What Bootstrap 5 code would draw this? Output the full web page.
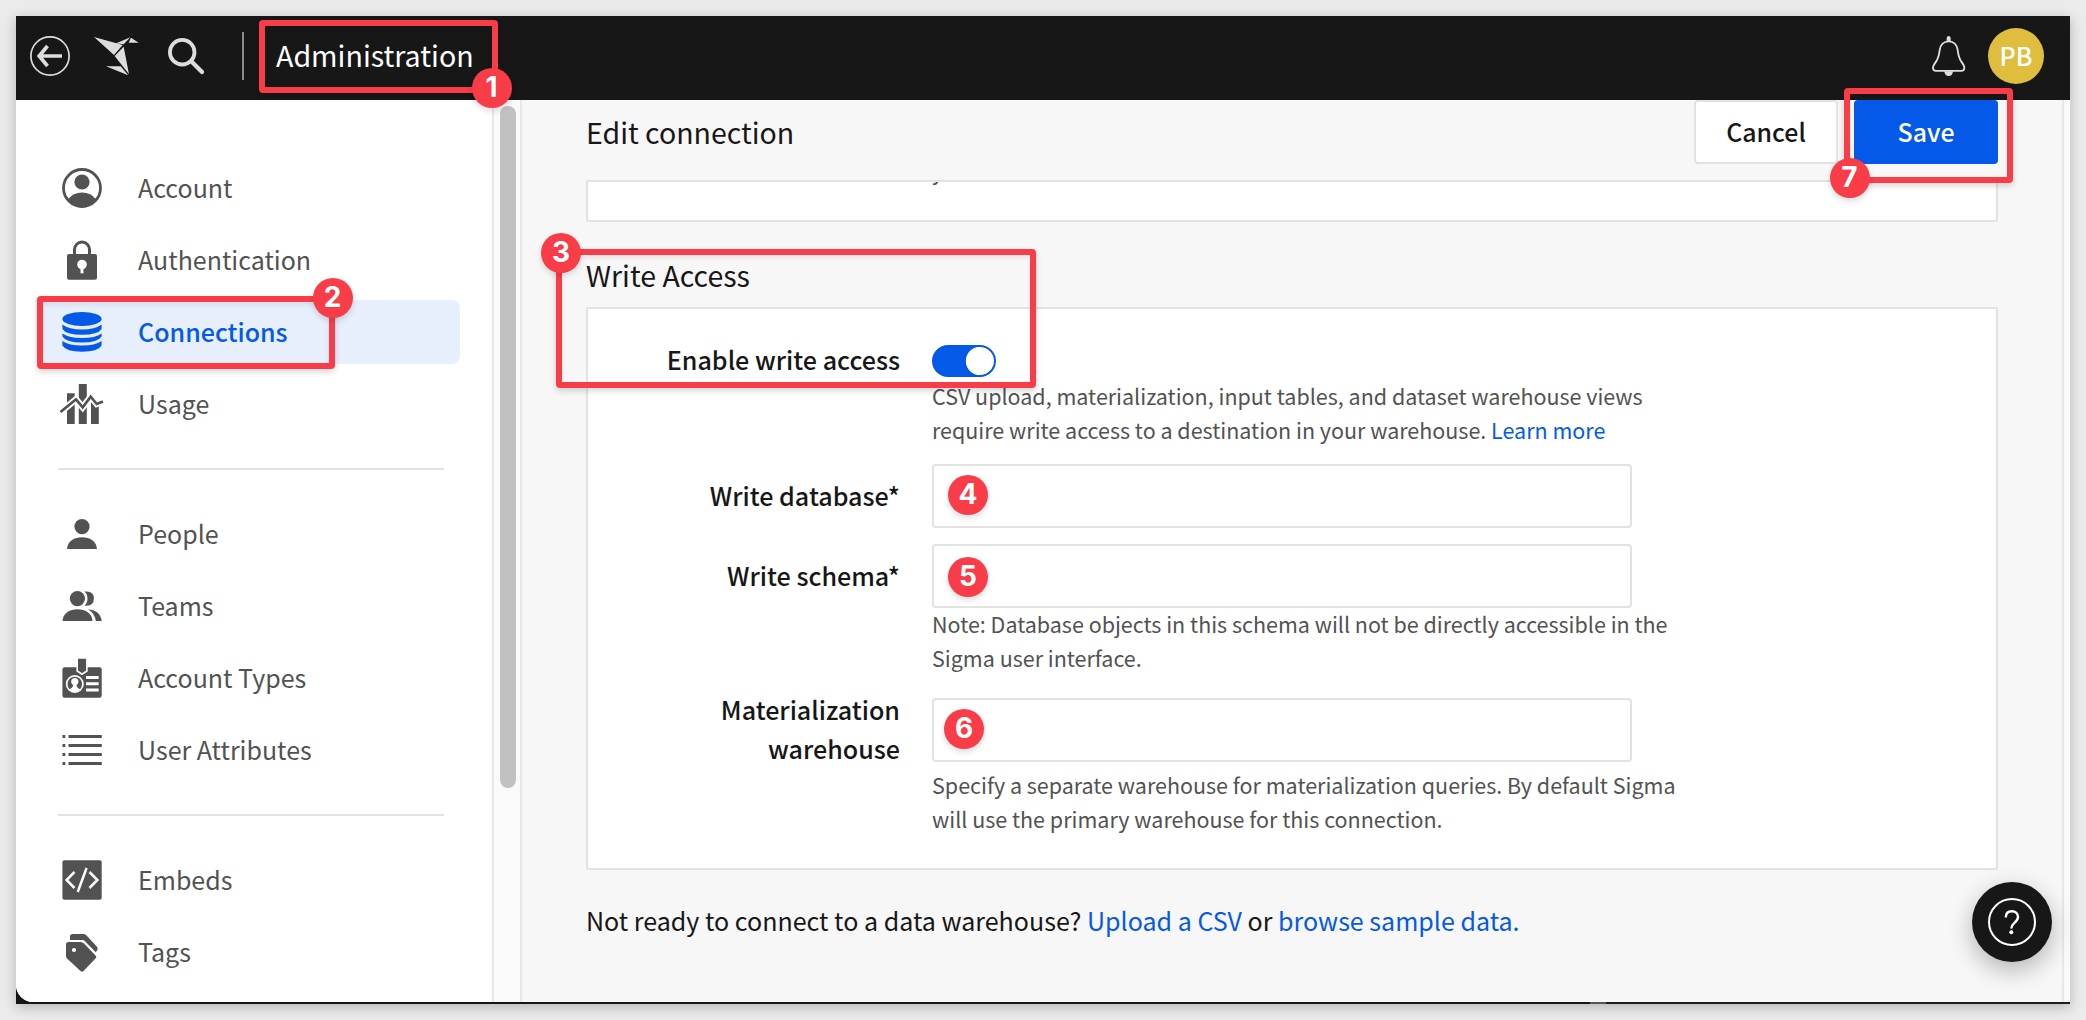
<!DOCTYPE html>
<html lang="en">
<head>
<meta charset="utf-8">
<meta name="viewport" content="width=device-width, initial-scale=1">
<title>Administration - Edit connection</title>
<link rel="stylesheet" href="https://cdn.jsdelivr.net/npm/bootstrap@5.3.0/dist/css/bootstrap.min.css">
<style>
  :root { --ink: #171717; --muted: #525252; --line: #e2e2e2; --blue: #0559e8; --red: #f93d48; }
  body { height: 1020px; overflow: hidden; background: #ebebeb; color: var(--ink);
    font-family: "Noto Sans CJK SC", "Noto Sans", sans-serif; font-size: 25px; line-height: 40px; padding: 16px; }
  a { text-decoration: none; color: var(--blue); }
  svg { display: block; flex: none; }
  .app-frame { width: 2054px; height: 988px; padding-bottom: 2px; box-shadow: 0 3px 12px rgba(0,0,0,.24);
    background: linear-gradient(90deg, #151515 1574px, #555 1574px, #555 1590px, #1d1b22 1590px); }
  .app-bar { height: 84px; background: #171717; padding: 0 26px 4px 14px; color: #fff; }
  .bar-title { font-size: 28.6px; padding-bottom: 2px; margin-left: 32px; }
  .bar-rule { width: 2px; height: 48px; background: #8b8b8b; margin-left: 37px; }
  .avatar { width: 56px; height: 56px; background: #dfbd3d; font-weight: 500; margin-left: 22px; padding-bottom: 3px; }
  .app-body { height: 902px; background: #f7f7f7; border-bottom-left-radius: 17px; overflow: hidden; }
  .side { width: 476px; background: #fff; padding: 56px 32px 0 24px; }
  .side .nav { gap: 8px; }
  .side .nav-link { height: 64px; padding: 0 0 0 22px; gap: 36px; color: var(--muted); border-radius: 8px; }
  .side .nav-link span { padding-bottom: 3px; }
  .side .nav-link.active { background: #e7eefc; color: var(--blue); font-weight: 500; }
  .side-rule { height: 2px; background: var(--line); margin: 32px 16px 32px 18px; }
  .track { width: 30px; background: #fafafa; border: solid #e8e8e8; border-width: 0 2px; padding: 6px 4px 0 6px; }
  .thumb { height: 682px; width: 16px; border-radius: 8px; background: #c1c1c1; }
  .main-pane { padding: 0 64px; }
  .page-title { font-size: 28.5px; font-weight: 400; line-height: 40px; margin: 0; }
  .page-head { height: 64px; }
  .page-head .page-title { padding-bottom: 1px; }
  .page-head .btn { width: 144px; height: 64px; font-size: 24.9px; font-weight: 500; border-radius: 4px; padding: 0 0 1px; line-height: 1; }
  .btn-cancel { background: #fff; border: 2px solid var(--line); color: var(--ink); }
  .btn-save { background: var(--blue); border: 0; color: #fff; }
  .panel { background: #fff; border: 2px solid var(--line); border-radius: 2px; }
  .panel-cut { height: 42px; margin-top: 16px; overflow: hidden; padding-left: 344px; }
  .panel-cut .hint { margin-top: -28px; }
  .section-title { margin: 33px 0 12px; }
  .panel-form { height: 563px; padding-top: 36px; }
  .f-label { width: 312px; margin-right: 32px; text-align: right; font-size: 25.1px; font-weight: 500; line-height: 39px; flex: none; }
  .f-label-switch { margin-top: -5px; }
  .f-label-input { margin-top: 12px; }
  .f-label-tall { margin-top: -8px; padding-left: 60px; }
  .hint { font-size: 21.49px; line-height: 34px; color: var(--muted); width: 756px; margin: 0; }
  .form-control.f-box { width: 700px; height: 64px; border: 2px solid var(--line); border-radius: 4px; background: #fff; }
  .form-check-input.f-switch { width: 64px; height: 32px; margin: 0; display: block; border: 2px solid var(--blue);
    background-color: var(--blue); border-radius: 16px; }
  .form-check-input.f-switch:checked { background-image: radial-gradient(circle at 46px 14px, #fff 13.8px, var(--blue) 14.6px); background-position: 0 0; background-size: 100%; background-origin: padding-box; }
  .right-track { width: 8px; background: #fafafa; border-left: 2px solid #e8e8e8; }
  .foot-note { margin: 30px 0 0; font-size: 25.04px; }
  /* callouts and floating help lie over the page */
  .callout-box { position: absolute; border: 6px solid var(--red); border-radius: 4px; box-shadow: 0 3px 6px rgba(0,0,0,.16), inset 0 3px 5px rgba(0,0,0,.08); }
  .callout-num { position: absolute; width: 40px; height: 40px; border-radius: 50%; background: var(--red); color: #fff;
    font: 700 28px/39px Inter, sans-serif; text-align: center; box-shadow: 0 3px 6px rgba(0,0,0,.14); }
  .help-fab { position: absolute; left: 1972px; top: 882px; width: 80px; height: 80px; border-radius: 50%; border: 0; padding: 0;
    background: #171717; box-shadow: 0 8px 24px rgba(0,0,0,.28); }
</style>
<script src="https://cdn.jsdelivr.net/npm/bootstrap@5.3.0/dist/js/bootstrap.bundle.min.js"></script>
</head>
<body>
<div class="app-frame">
  <header class="app-bar d-flex align-items-center">
    <svg width="40" height="40" viewBox="0 0 40 40" fill="none" stroke="#ddd"><circle cx="20" cy="20" r="19.1" stroke-width="1.7"/><path d="M32 20H9.5M17.5 10L9.2 20l8.3 10" stroke-width="3.7"/></svg>
    <svg style="margin-left:24px" width="45" height="38.4" viewBox="222 51 135 115" fill="#ddd"><path d="M222 51L308 75 282 105zM289 70L331 52 311 73zM333 53L356 68H326zM284 108L311 80 327 163zM258 139H302L325 166z"/></svg>
    <svg style="margin-left:28px" width="38" height="38" viewBox="0 0 38 38" fill="none" stroke="#ddd"><circle cx="15.2" cy="15.2" r="12.3" stroke-width="3.8"/><path d="M24.5 24.5L35 35" stroke-width="4.2" stroke-linecap="round"/></svg>
    <div class="bar-rule"></div>
    <div class="bar-title">Administration</div>
    <svg class="ms-auto" width="33.7" height="40" viewBox="814 108 101 120"><path d="M864 124C848 124 839 136 837 150C835 168 834 173 826 185C820 193 817 197 817 204Q817 212 826 212.500H902Q911 212 911 204C911 197 908 193 902 185C894 173 893 168 891 150C889 136 880 124 864 124Z" fill="none" stroke="#ddd" stroke-width="5.5"/><path d="M858 124V113Q859 108 864 108Q869 108 870 113V124zM851 214H877Q876 228 864 228Q852 228 851 214z" fill="#ddd"/></svg>
    <div class="avatar rounded-circle d-flex align-items-center justify-content-center">PB</div>
  </header>

  <div class="app-body d-flex">
    <aside class="side flex-shrink-0">
      <nav class="nav flex-column">
        <a class="nav-link d-flex align-items-center" href="#"><svg width="40" height="40" viewBox="0 0 40 40" fill="#525252"><circle cx="20" cy="20" r="18.500" fill="none" stroke="#525252" stroke-width="2.800"/><circle cx="20" cy="14" r="7.600"/><path d="M6.500 31Q11 24.500 20 24.500T33.500 31Q29 39.500 20 39.500T6.500 31z"/></svg><span>Account</span></a>
        <a class="nav-link d-flex align-items-center" href="#"><svg width="40" height="40" viewBox="0 0 40 40" fill="#525252"><path d="M12.500 15V9.500a7.500 7.500 0 0 1 15 0V15" fill="none" stroke="#525252" stroke-width="3"/><rect x="5" y="14" width="30" height="25.700" rx="2"/><circle cx="20" cy="24.500" r="4.800" fill="#fff"/><path d="M18.500 27h3v6.300h-3z" fill="#fff"/></svg><span>Authentication</span></a>
        <a class="nav-link active d-flex align-items-center" href="#"><svg width="40" height="40" viewBox="0 0 40 40" fill="#0559e8"><ellipse cx="20" cy="7" rx="19.600" ry="6.900"/><path d="M.4 12.500Q7 17.500 20 17.500T39.600 12.500V17Q36 22.800 20 22.800T.4 17zM.4 21.500Q7 26 20 26T39.600 21.500V24.500Q36 30.500 20 30.500T.4 24.500zM.4 29Q7 33.500 20 33.500T39.600 29V33.500Q36 39.700 20 39.700T.4 33.500z"/></svg><span>Connections</span></a>
        <a class="nav-link d-flex align-items-center" href="#"><svg width="40" height="40" viewBox="0 0 40 40" fill="#525252" overflow="visible"><path d="M5 9.300h7.700V40H5zM16.800 0h8V40h-8zM29 18h7.800V40H29z"/><path d="M-2 28.500L14 15.300 20.700 23.300 28.700 12.700 34.700 20 42 17.200" fill="none" stroke="#fff" stroke-width="6.500"/><path d="M-1.500 28L14 15.300 20.700 23.300 28.700 12.700 34.700 20 41 17.500" fill="none" stroke="#525252" stroke-width="2.700"/></svg><span>Usage</span></a>
      </nav>
      <div class="side-rule"></div>
      <nav class="nav flex-column">
        <a class="nav-link d-flex align-items-center" href="#"><svg width="40" height="40" viewBox="0 0 40 40" fill="#525252"><circle cx="20" cy="12.600" r="7.600"/><path d="M5 35Q5.500 29 10 26Q14 23.200 20 23.200T30 26Q34.500 29 35 35z"/></svg><span>People</span></a>
        <a class="nav-link d-flex align-items-center" href="#"><svg width="40" height="40" viewBox="0 0 40 40" fill="#525252"><circle cx="15.400" cy="12.600" r="7.600"/><path d="M.5 35Q1 29 5.500 26Q9.500 23.200 15.500 23.200T25.500 26Q30 29 30.500 35z"/><path d="M22.500 5.600Q31.800 4.500 31.900 12.600Q31.800 20.700 22.500 19.700Q25.500 17 25.500 12.600T22.500 5.600zM26 23.200Q38.500 24.500 39.700 35H33.800Q33 27.500 26 23.200z"/></svg><span>Teams</span></a>
        <a class="nav-link d-flex align-items-center" href="#"><svg width="40" height="40" viewBox="0 0 40 40" fill="#525252"><rect x=".4" y="9.300" width="39.300" height="30.500" rx="2.200"/><path d="M15.200 0H24.900V13L20 16.200 15.200 13z" stroke="#fff" stroke-width="1.600"/><circle cx="12.800" cy="26" r="9" fill="#fff"/><circle cx="12.800" cy="26" r="7.300"/><circle cx="12.800" cy="23.600" r="3.600" fill="#fff"/><path d="M7 31.500Q11 29.800 11.300 26.500H14.300Q14.600 29.800 18.600 31.500Q16.500 34 12.800 34T7 31.500z" fill="#fff"/><path d="M24 18h12.700v3H24zM24 24.200h12.700v3H24zM24 30.400h12.700v3H24z" fill="#fff"/></svg><span>Account Types</span></a>
        <a class="nav-link d-flex align-items-center" href="#"><svg width="40" height="40" viewBox="0 0 40 40" fill="#525252"><path d="M.5 5H3.300V8H.5zM6.500 5H39.800V8H6.500zM.5 14H3.300V17H.5zM6.500 14H39.800V17H6.500zM.5 23H3.300V26H.5zM6.500 23H39.800V26H6.500zM.5 32H3.300V35H.5zM6.500 32H39.800V35H6.500z"/></svg><span>User Attributes</span></a>
      </nav>
      <div class="side-rule"></div>
      <nav class="nav flex-column">
        <a class="nav-link d-flex align-items-center" href="#"><svg width="40" height="40" viewBox="0 0 40 40" fill="none" stroke="#fff" stroke-width="2.500"><rect x=".4" y=".2" width="39.300" height="39.500" rx="2" fill="#525252" stroke="none"/><path d="M12.500 12L4.600 20 12.500 28M24.600 8L15.700 32M27.500 12L35.400 20 27.500 28"/></svg><span>Embeds</span></a>
        <a class="nav-link d-flex align-items-center" href="#"><svg width="40" height="40" viewBox="0 0 40 40" fill="#525252"><path d="M6.500 10H18.500Q20.500 10 22 11.500L33.500 23.500Q35 25 33.500 26.500L21.500 39Q20 40.300 18.500 39L5 26.500Q4 25.500 4 24V12.500Q4 10 6.500 10z"/><path d="M8 8V4.500Q8 2 10.500 2H21.500Q23 2 24.300 3.300L35 14.800Q36.300 16.300 35.300 18L33.800 20.300L22.500 8.700Q21.800 8 20.500 8z"/><circle cx="12" cy="18" r="2.100" fill="#fff"/></svg><span>Tags</span></a>
      </nav>
    </aside>
    <div class="track flex-shrink-0"><div class="thumb"></div></div>

    <main class="main-pane flex-grow-1">
      <div class="page-head d-flex align-items-center">
        <h1 class="page-title me-auto">Edit connection</h1>
        <button class="btn btn-cancel" type="button">Cancel</button>
        <button class="btn btn-save ms-3" type="button">Save</button>
      </div>
      <section class="panel panel-cut"><p class="hint">y</p></section>
      <h2 class="page-title section-title">Write Access</h2>
      <section class="panel panel-form">
        <div class="d-flex align-items-start">
          <label class="f-label f-label-switch" for="wa">Enable write access</label>
          <div class="form-switch p-0">
            <input class="form-check-input f-switch float-none" type="checkbox" id="wa" checked>
            <p class="hint" style="margin:2px 0 17px">CSV upload, materialization, input tables, and dataset warehouse views require write access to a destination in your warehouse. <a href="#">Learn more</a></p>
          </div>
        </div>
        <div class="d-flex align-items-start mb-3">
          <label class="f-label f-label-input" for="wd">Write database*</label>
          <input class="form-control f-box" id="wd">
        </div>
        <div class="d-flex align-items-start">
          <label class="f-label f-label-input" for="ws">Write schema*</label>
          <div>
            <input class="form-control f-box" id="ws">
            <p class="hint" style="margin:-1px 0 23px">Note: Database objects in this schema will not be directly accessible in the Sigma user interface.</p>
          </div>
        </div>
        <div class="d-flex align-items-start">
          <label class="f-label f-label-tall" for="mw">Materialization warehouse</label>
          <div>
            <input class="form-control f-box" id="mw">
            <p class="hint" style="margin-top:6px">Specify a separate warehouse for materialization queries. By default Sigma will use the primary warehouse for this connection.</p>
          </div>
        </div>
      </section>
      <p class="foot-note">Not ready to connect to a data warehouse? <a href="#">Upload a CSV</a> or <a href="#">browse sample data.</a></p>
    </main>
    <div class="right-track flex-shrink-0"></div>
  </div>
</div>

<div class="callout-box" style="left:258.5px;top:19.5px;width:239px;height:73px"></div>
<div class="callout-box" style="left:36.5px;top:296px;width:298.5px;height:73px"></div>
<div class="callout-box" style="left:556px;top:249px;width:480px;height:139px"></div>
<div class="callout-box" style="left:1844px;top:88px;width:169px;height:95px"></div>
<div class="callout-num" style="left:471.5px;top:67.500px">1</div>
<div class="callout-num" style="left:312.5px;top:278px">2</div>
<div class="callout-num" style="left:541px;top:232.5px">3</div>
<div class="callout-num" style="left:948px;top:475px">4</div>
<div class="callout-num" style="left:948px;top:556.500px">5</div>
<div class="callout-num" style="left:944px;top:709px">6</div>
<div class="callout-num" style="left:1829.5px;top:157.500px">7</div>
<button class="help-fab" type="button" aria-label="Help"><svg width="80" height="80" viewBox="0 0 80 80" fill="none" stroke="#fff" stroke-width="2"><circle cx="40" cy="40" r="23"/><path d="M33.800 35.500C33.800 31.500 36.200 29.300 39.900 29.300S46 31.500 46 35C46 38 44 39.500 42 41.300C40 43 39.300 44 39.300 46.500" stroke-width="2.400"/><circle cx="39.300" cy="50.300" r="2" fill="#fff" stroke="none"/></svg></button>
</body>
</html>
